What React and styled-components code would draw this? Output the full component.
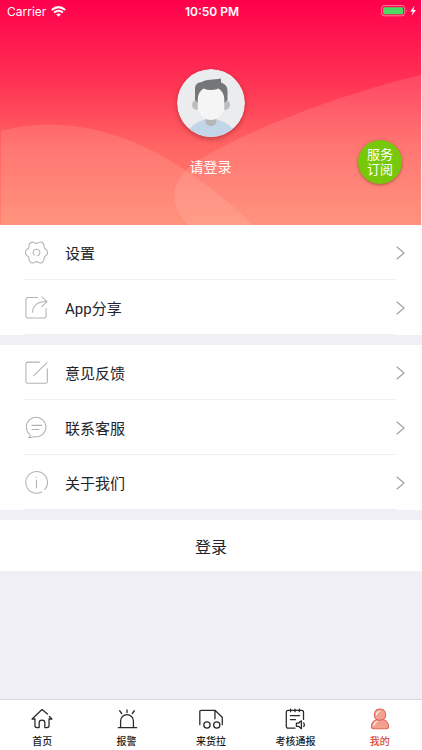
import React from 'react'
import styled, { createGlobalStyle } from 'styled-components'


const GlobalStyle = createGlobalStyle`
  * {
    box-sizing: border-box;
  }
  body {
    margin: 0;
    background: #f0eff5;
    font-family: Roboto, 'Noto Sans CJK SC', sans-serif;
    color: #23232b;
  }
  button {
    border: 0;
    padding: 0;
    font-family: inherit;
    cursor: pointer;
  }
  a {
    color: inherit;
    text-decoration: none;
  }
  svg {
    display: block;
  }
`

const Page = styled.div`
  display: flex;
  flex-direction: column;
  min-height: 100vh;
`

const Header = styled.header`
  position: relative;
  height: 225px;
  margin-right: 1px;
  background: linear-gradient(#ff004c, #ff3855 40%, #ff6663 66%, #ff8670);
  color: #fff;
`

const Waves = styled.svg`
  position: absolute;
  inset: 0;
  width: 100%;
  height: 100%;
`

const StatusBar = styled.div`
  position: relative;
  display: grid;
  grid-template-columns: 1fr auto 1fr;
  align-items: center;
  height: 22px;
  padding: 0 4px 0 7px;
  font-family: Inter, sans-serif;
  font-size: 12px;
`

const StatusSide = styled.div`
  display: flex;
  align-items: center;
  justify-content: ${({ $end }) => ($end ? 'flex-end' : 'flex-start')};
  gap: 5px;
`

const Time = styled.span`
  font-weight: 600;
`

const Profile = styled.div`
  position: relative;
  display: flex;
  flex-direction: column;
  align-items: center;
  gap: 20px;
  padding-top: 47px;
`

const Avatar = styled.svg`
  width: 68px;
  height: 68px;
  border-radius: 50%;
  box-shadow: 0 2px 5px rgba(90, 20, 30, 0.4);
`

const LoginHint = styled.a`
  font-size: 14px;
  line-height: 20px;
`

const Subscribe = styled.button`
  position: absolute;
  right: 19px;
  bottom: 41px;
  width: 44px;
  height: 44px;
  padding: 0 9px;
  border-radius: 50%;
  background: #78c80a;
  box-shadow: 0 1px 3px rgba(90, 40, 20, 0.5);
  color: #fff;
  font-size: 13px;
  line-height: 15px;
`

const Main = styled.main`
  display: flex;
  flex: 1;
  flex-direction: column;
  gap: 10px;
`

const Group = styled.nav`
  background: #fff;
`

const Row = styled.a`
  display: flex;
  height: 55px;
  padding: 0 17px 0 25px;
`

const RowBody = styled.span`
  display: flex;
  flex: 1;
  align-items: center;
  gap: 17px;
  border-bottom: 1px solid #efeff2;
  font-size: 15px;
`

const RowArrow = styled.span`
  display: flex;
  align-items: center;
`

const LoginButton = styled.button`
  height: 51px;
  background: #fff;
  color: #23232b;
  font-size: 16px;
`

const TabBar = styled.nav`
  display: flex;
  height: 51px;
  border-top: 1px solid #d8d8dc;
  background: #fff;
`

const Tab = styled.a`
  display: flex;
  flex: 1;
  flex-direction: column;
  align-items: center;
  gap: 5px;
  padding-top: 8px;
  color: ${({ $active }) => ($active ? '#d8483e' : '#1c1c1e')};
  font-size: 10px;
  font-weight: 500;
  line-height: 14px;
`

const RowIcon = styled.svg.attrs({ viewBox: '0 0 24 24', 'aria-hidden': true })`
  width: 23px;
  height: 23px;
  fill: none;
  stroke: #b2b2b5;
  stroke-width: 1.1;
  stroke-linecap: round;
  stroke-linejoin: round;
`

const TabIcon = styled.svg.attrs({ 'aria-hidden': true })`
  width: ${({ $wide }) => ($wide ? 26 : 22)}px;
  height: 22px;
  fill: none;
  stroke: ${({ $active }) => ($active ? '#df6558' : '#2a2a2c')};
  stroke-width: ${({ $active }) => ($active ? 1.1 : 1.4)};
  stroke-linecap: round;
  stroke-linejoin: round;
`

const SettingsIcon = () => (
  <RowIcon>
    <g transform="translate(12 12)">
      <path d="M11.5 0C11.5 3.8 9.3 2.8 8.2 4.8 7.1 6.8 9.1 8.4 5.8 10.4 2.6 12.2 2.5 9.5 0 9.5-2.5 9.5-2.6 12.2-5.8 10.4-9.1 8.4-7.1 6.8-8.2 4.8-9.3 2.8-11.5 3.8-11.5 0-11.5-3.8-9.3-2.8-8.2-4.8-7.1-6.8-9.1-8.4-5.8-10.4-2.6-12.2-2.5-9.5 0-9.5 2.5-9.5 2.6-12.2 5.8-10.4 9.1-8.4 7.1-6.8 8.2-4.8 9.3-2.8 11.5-3.8 11.5 0Z" />
      <path d="M-2.3 2.7A3.5 3.5 0 1 1 1 3.4" />
    </g>
  </RowIcon>
)

const ShareIcon = () => (
  <RowIcon>
    <path d="M13 1.5H3Q1 1.5 1 3.5V21Q1 23 3 23H20Q22 23 22 21V13" />
    <path d="M8 17C7.8 10.5 12.5 5.8 22.5 5.8M17.5 1 23 5.8 17.5 11" />
  </RowIcon>
)

const FeedbackIcon = () => (
  <RowIcon>
    <path d="M15 1.2H3Q1 1.2 1 3V21.5Q1 23.3 3 23.3H21.5Q23.3 23.3 23.3 21.5V8M9 15.3 23 1.8" />
  </RowIcon>
)

const ServiceIcon = () => (
  <RowIcon>
    <path d="M4.8 19.2A10.2 10.2 0 1 1 9.2 21.5C7.7 22.4 5.8 22.8 3.8 22.4L6.2 20.3" />
    <path d="M7.3 9.8H17.3M7.3 14H14.3" />
  </RowIcon>
)

const AboutIcon = () => (
  <RowIcon>
    <path d="M20.6 19.4A11.3 11.3 0 1 0 17.6 21.8M12 9.5V17.5M12 6.5V6.8" />
  </RowIcon>
)

const ArrowIcon = () => (
  <svg width="9" height="14" viewBox="0 0 9 14" fill="none" stroke="#a2a2a6" strokeWidth="1.2" aria-hidden="true">
    <path d="M.7.7 8 7 .7 13.3" />
  </svg>
)

const HomeIcon = () => (
  <TabIcon viewBox="0 0 24 24">
    <path d="M18 6.5 12 1.7 1.2 12H4.3V19Q4.3 21.3 6.5 21.3H8.9V16.2C8.9 12.2 15.1 12.2 15.1 16.2V21.3H17.4Q19.7 21.3 19.7 19V12H22.8L20 9.2" />
  </TabIcon>
)

const AlarmIcon = () => (
  <TabIcon viewBox="0 0 24 24">
    <path d="M2.5 21.5H22.5M5 21V14.2A7 7 0 0 1 19 14.2V21M12 2V5M4 3 6.2 6M20 3 17.8 6" />
  </TabIcon>
)

const TruckIcon = () => (
  <TabIcon $wide viewBox="0 0 28 24">
    <path d="M1.8 18.2V3.8Q1.8 2.5 3 2.5H18.3L26.3 10V18.2M18.3 2.5V11.8" />
    <circle cx="9.6" cy="18.5" r="3.4" />
    <circle cx="20.3" cy="18.5" r="3.4" />
  </TabIcon>
)

const ReportIcon = () => (
  <TabIcon viewBox="0 0 24 24">
    <path d="M12 22H5Q2.5 22 2.5 19.5V4.5Q2.5 2.5 5 2.5H19Q21.3 2.5 21.3 4.5V12.5M7.2 1.2V4M12 1.2V4M16.8 1.2V4M7 8.2H17M7 12.7H12.5" />
    <path d="M13.5 16.5H15.8L19 14V22.5L15.8 20H13.5ZM21.5 16.3Q23 18.3 21.5 20.3" />
  </TabIcon>
)

const MineIcon = () => (
  <TabIcon $active viewBox="0 0 24 24">
    <path fill="#f2a090" d="M12 1.2A6.2 6.2 0 0 0 8.6 12.6C4.8 14 2.6 17 2.6 20.2Q2.6 22.7 5 22.7H19Q21.4 22.7 21.4 20.2C21.4 17 19.2 14 15.4 12.6A6.2 6.2 0 0 0 12 1.2Z" />
    <path d="M8.2 7.3A3.8 3.8 0 0 1 11.5 3.7M5.3 19Q6 16 8.6 14.8" stroke="#fff" />
    <path d="M8.6 12.6Q12 14.2 15.4 12.6" />
  </TabIcon>
)

const WifiIcon = () => (
  <svg width="15" height="11" viewBox="0 0 15 11" fill="none" stroke="#fff" strokeWidth="2" aria-hidden="true">
    <path d="M.8 4.1Q7.5-1.8 14.2 4.1M3.1 6.6Q7.5 2.8 11.9 6.6" />
    <path d="M7.5 10.8 5.2 8.4Q7.5 6.6 9.8 8.4Z" fill="#fff" stroke="none" />
  </svg>
)

const BatteryIcon = () => (
  <svg width="36" height="12" viewBox="0 0 36 12" aria-hidden="true">
    <rect x=".6" y=".6" width="23" height="10.2" rx="2.5" fill="none" stroke="#fff" strokeOpacity=".45" />
    <rect x="2.2" y="2.2" width="19.8" height="7" rx="1" fill="#4cd964" />
    <path d="M25 4V7.6Q26.6 5.8 25 4Z" fill="#fff" fillOpacity=".5" />
    <path d="M33.6.8 29.2 6.5H31.8L30.6 10.8 35 5H32.4Z" fill="#fff" />
  </svg>
)

const DefaultAvatar = () => (
  <Avatar viewBox="0 0 68 68" role="img" aria-label="头像">
    <circle cx="34" cy="34" r="34" fill="#ebeced" />
    <path d="M12.5 60Q20 50.3 34 50.3T55.5 60Q46 68 34 68T12.5 60Z" fill="#c3d5e9" />
    <path d="M28.5 48H39.5V53Q38 57 34 57T28.5 53Z" fill="#b4b5b6" />
    <circle cx="20" cy="36" r="5" fill="#bcbdbe" />
    <circle cx="48" cy="36" r="5" fill="#bcbdbe" />
    <path d="M18 31V20C18 15 21 13.5 25 13 29 10 36 11 44 9.5V13.5C49 15.5 50.5 18 50.5 22V31L47 34H21Z" fill="#757677" />
    <path d="M20.7 40V30Q21 23 26.5 19.5 34 22.7 41.5 19.5 47 23 47.3 30V40C44 48 39 51 34 51S24 48 20.7 40Z" fill="#f5f5f6" />
  </Avatar>
)

const account = [
  { label: '设置', Icon: SettingsIcon },
  { label: 'App分享', Icon: ShareIcon },
]

const support = [
  { label: '意见反馈', Icon: FeedbackIcon },
  { label: '联系客服', Icon: ServiceIcon },
  { label: '关于我们', Icon: AboutIcon },
]

const tabs = [
  { label: '首页', Icon: HomeIcon },
  { label: '报警', Icon: AlarmIcon },
  { label: '来货拉', Icon: TruckIcon },
  { label: '考核通报', Icon: ReportIcon },
  { label: '我的', Icon: MineIcon, active: true },
]

const Menu = ({ items }) => (
  <Group>
    {items.map(({ label, Icon }) => (
      <Row href="#" key={label}>
        <RowBody>
          <Icon />
          {label}
        </RowBody>
        <RowArrow><ArrowIcon /></RowArrow>
      </Row>
    ))}
  </Group>
)

const App = () => (
  <Page>
    <GlobalStyle />
    <Header>
      <Waves viewBox="0 0 421 225" preserveAspectRatio="none" aria-hidden="true">
        <path d="M1 131C60 115 120 130 176 164C205 183 232 204 253 225H1Z" fill="#ffe0c8" fillOpacity=".15" />
        <path d="M421 75C350 92 265 122 204 157C168 178 167 203 188 225H421Z" fill="#ffe0d0" fillOpacity=".15" />
      </Waves>
      <StatusBar>
        <StatusSide>
          Carrier
          <WifiIcon />
        </StatusSide>
        <Time>10:50 PM</Time>
        <StatusSide $end>
          <BatteryIcon />
        </StatusSide>
      </StatusBar>
      <Profile>
        <DefaultAvatar />
        <LoginHint href="#">请登录</LoginHint>
      </Profile>
      <Subscribe type="button">服务订阅</Subscribe>
    </Header>
    <Main>
      <Menu items={account} />
      <Menu items={support} />
      <LoginButton type="button">登录</LoginButton>
    </Main>
    <TabBar>
      {tabs.map(({ label, Icon, active }) => (
        <Tab href="#" key={label} $active={active}>
          <Icon />
          {label}
        </Tab>
      ))}
    </TabBar>
  </Page>
)

export default App
